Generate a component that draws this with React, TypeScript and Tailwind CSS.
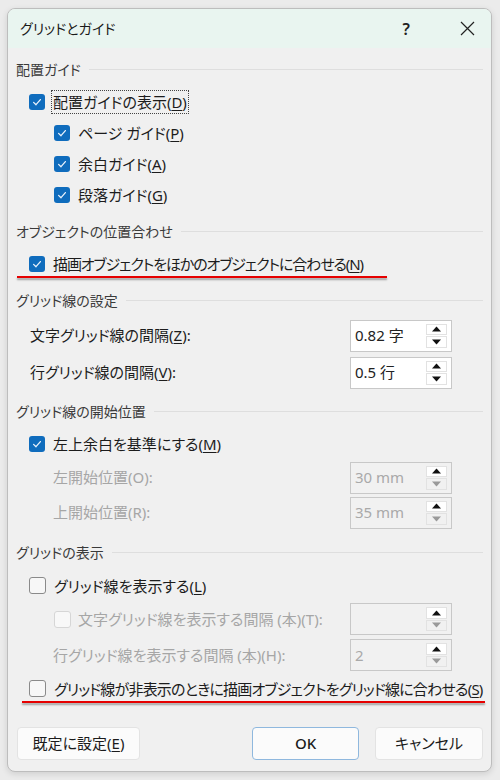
import React from "react";

const U = ({ c }: { c: string }) => <span className="underline underline-offset-2">{c}</span>;

function Check({ checked, disabled }: { checked?: boolean; disabled?: boolean }) {
  if (checked) {
    return (
      <div className="w-[16px] h-[16px] rounded-[3px] bg-[#0f6cbd] flex items-center justify-center shrink-0">
        <svg width="16" height="16" viewBox="0 0 16 16">
          <path d="M4.6 8.4 L7 10.7 L11.4 5.6" fill="none" stroke="#e8f1fb" strokeWidth="1.3" strokeLinecap="round" strokeLinejoin="round" />
        </svg>
      </div>
    );
  }
  if (disabled) {
    return <div className="w-[17px] h-[17px] rounded-[3px] border border-[#d6d6d6] bg-[#f8f8f8] shrink-0" />;
  }
  return <div className="w-[17px] h-[17px] rounded-[3px] border border-[#8a8a8a] bg-[#f7f7f7] shrink-0" />;
}

function Tri({ up, color }: { up?: boolean; color: string }) {
  return (
    <svg width="9" height="6" viewBox="0 0 9 6">
      {up ? <polygon points="0,5.5 4.5,0.5 9,5.5" fill={color} /> : <polygon points="0,0.5 4.5,5.5 9,0.5" fill={color} />}
    </svg>
  );
}

function Spinner({ value, disabled }: { value: React.ReactNode; disabled?: boolean }) {
  return (
    <div
      className={`w-[102px] h-[32px] border border-[#c8c8c8] p-px flex ${disabled ? "bg-[#f1f1f1]" : "bg-white"}`}
    >
      <div className={`flex-1 flex items-center pl-[3px] text-[15px] ${disabled ? "text-[#a9a9a9]" : "text-[#222]"}`}>{value}</div>
      <div className="w-[21px] mr-[3px] my-[2px] flex flex-col gap-px">
        <div className="flex-1 bg-white border border-[#e2e2e2] flex items-center justify-center">
          <Tri up color="#111" />
        </div>
        <div className={`flex-1 border border-[#e2e2e2] flex items-center justify-center ${disabled ? "bg-[#f1f1f1]" : "bg-white"}`}>
          <Tri color={disabled ? "#9a9a9a" : "#111"} />
        </div>
      </div>
    </div>
  );
}

function Header({ children, mt }: { children: React.ReactNode; mt: string }) {
  return (
    <div className={`flex items-center h-[22px] gap-[8px] ${mt}`}>
      <span className="text-[14px] text-[#3a3a3a]">{children}</span>
      <div className="flex-1 h-px bg-[#dedede]" />
    </div>
  );
}

function CheckRow({
  checked,
  disabled,
  level,
  children,
  focus,
  red,
  track,
}: {
  checked?: boolean;
  disabled?: boolean;
  level: 1 | 2;
  children: React.ReactNode;
  focus?: boolean;
  red?: string;
  track?: string;
}) {
  return (
    <div className={`relative h-[31px] flex items-center ${level === 1 ? "pl-[13px]" : "pl-[38px]"}`}>
      <Check checked={checked} disabled={disabled} />
      <span
        className={`ml-[6px] whitespace-nowrap text-[15px] leading-[22px] px-px ${track ?? ""} ${
          disabled ? "text-[#a6a6a6]" : "text-[#1c1c1c]"
        } ${focus ? "border border-dotted border-[#444]" : "border border-transparent"}`}
      >
        {children}
      </span>
      {red && <div className={`absolute top-[28px] h-[2px] bg-[#e60000] shadow-[0_2px_2px_rgba(0,0,0,0.35)] ${red}`} />}
    </div>
  );
}

function SpinRow({
  label,
  value,
  disabled,
  indent,
  h,
}: {
  label: React.ReactNode;
  value: React.ReactNode;
  disabled?: boolean;
  indent: string;
  h: string;
}) {
  return (
    <div className={`flex items-center pr-[31px] ${h}`}>
      <span className={`flex-1 whitespace-nowrap text-[15px] ${indent} ${disabled ? "text-[#a6a6a6]" : "text-[#1c1c1c]"}`}>{label}</span>
      <Spinner value={value} disabled={disabled} />
    </div>
  );
}

export default function App() {
  return (
    <div className="w-[500px] h-[780px] bg-[#ebebeb] pt-[8px] pl-[7px] font-['Noto_Sans','Noto_Sans_CJK_JP',sans-serif] [font-feature-settings:'palt']">
      <div className="w-[485px] h-[764px] rounded-[8px] border border-[#bdbdbd] overflow-hidden bg-[#f0f0f0] flex flex-col shadow-[0_2px_6px_rgba(0,0,0,0.12)]">
        <div className="h-[39px] shrink-0 bg-[#e9f5f0] flex items-center pl-[12px] pr-[16px]">
          <span className="text-[14px] text-[#1a1a1a]">グリッドとガイド</span>
          <span className="ml-auto mr-[50px] text-[16px] font-semibold text-[#222]">?</span>
          <svg width="15" height="15" viewBox="0 0 15 15">
            <path d="M1 1 L14 14 M14 1 L1 14" stroke="#222" strokeWidth="1.2" />
          </svg>
        </div>
        <div className="flex-1 flex flex-col px-[8px]">
          <Header mt="mt-[10px]">配置ガイド</Header>
          <div className="mt-[6px]">
            <CheckRow checked level={1} focus>
              配置ガイドの表示(<U c="D" />)
            </CheckRow>
            <CheckRow checked level={2}>
              ページ ガイド(<U c="P" />)
            </CheckRow>
            <CheckRow checked level={2}>
              余白ガイド(<U c="A" />)
            </CheckRow>
            <CheckRow checked level={2}>
              段落ガイド(<U c="G" />)
            </CheckRow>
          </div>
          <Header mt="mt-[10px]">オブジェクトの位置合わせ</Header>
          <div className="mt-[6px]">
            <CheckRow checked level={1} red="left-[1px] w-[370px]" track="tracking-[-1.1px]">
              描画オブジェクトをほかのオブジェクトに合わせる(<U c="N" />)
            </CheckRow>
          </div>
          <Header mt="mt-[10px]">グリッド線の設定</Header>
          <div className="mt-[6px]">
            <SpinRow h="h-[37px]" indent="pl-[14px]" label={<>文字グリッド線の間隔(<U c="Z" />):</>} value="0.82 字" />
            <SpinRow h="h-[37px]" indent="pl-[14px]" label={<>行グリッド線の間隔(<U c="V" />):</>} value="0.5 行" />
          </div>
          <Header mt="mt-[9px]">グリッド線の開始位置</Header>
          <div className="mt-[6px]">
            <CheckRow checked level={1}>
              左上余白を基準にする(<U c="M" />)
            </CheckRow>
          </div>
          <div className="mt-px">
            <SpinRow h="h-[35px]" indent="pl-[37px]" disabled label="左開始位置(O):" value="30 mm" />
            <SpinRow h="h-[35px]" indent="pl-[37px]" disabled label="上開始位置(R):" value="35 mm" />
          </div>
          <Header mt="mt-[11px]">グリッドの表示</Header>
          <div className="mt-[7px]">
            <CheckRow level={1}>
              グリッド線を表示する(<U c="L" />)
            </CheckRow>
          </div>
          <div className="flex items-center pr-[31px] h-[36px]">
            <div className="flex-1 flex items-center pl-[38px]">
              <Check disabled />
              <span className="ml-[7px] whitespace-nowrap text-[15px] text-[#a6a6a6]">文字グリッド線を表示する間隔 (本)(T):</span>
            </div>
            <Spinner disabled value="" />
          </div>
          <SpinRow h="h-[36px]" indent="pl-[37px]" disabled label="行グリッド線を表示する間隔 (本)(H):" value="2" />
          <CheckRow level={1} red="left-[6px] w-[463px]" track="tracking-[-0.8px]">
            グリッド線が非表示のときに描画オブジェクトをグリッド線に合わせる(<U c="S" />)
          </CheckRow>
          <div className="mt-[23px] flex items-center">
            <button className="ml-px w-[123px] h-[33px] bg-[#fbfbfb] border border-[#e3e3e3] rounded-[4px] text-[15px] text-[#1c1c1c]">
              既定に設定(<U c="E" />)
            </button>
            <div className="ml-auto flex gap-[16px]">
              <button className="w-[107px] h-[33px] bg-[#fbfbfb] border border-[#8fb8de] rounded-[4px] text-[15px] font-medium text-[#1c1c1c]">
                OK
              </button>
              <button className="w-[108px] h-[33px] bg-[#fbfbfb] border border-[#e3e3e3] rounded-[4px] text-[15px] text-[#1c1c1c]">
                キャンセル
              </button>
            </div>
          </div>
        </div>
      </div>
    </div>
  );
}
